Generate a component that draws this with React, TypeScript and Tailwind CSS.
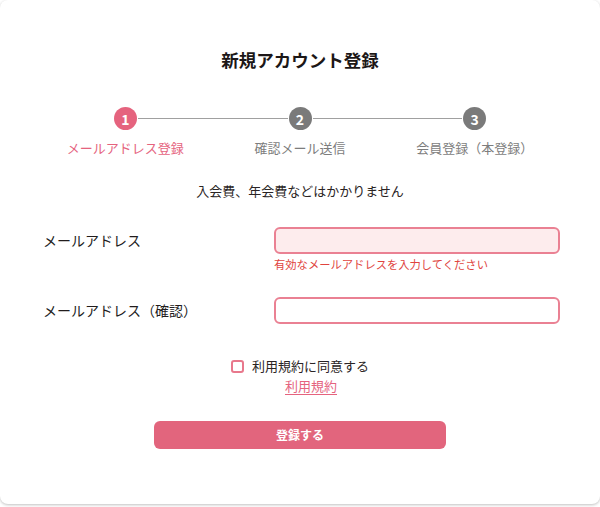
import React from "react";

const steps = [
  { n: 1, label: "メールアドレス登録", active: true },
  { n: 2, label: "確認メール送信", active: false },
  { n: 3, label: "会員登録（本登録）", active: false },
];

export default function App() {
  return (
    <div
      className="w-[600px] h-[507px] bg-white"
      style={{ fontFamily: '"Noto Sans CJK JP", "Noto Sans", sans-serif' }}
    >
      <div className="h-[504px] rounded-lg bg-white shadow-[0_1px_3px_rgba(0,0,0,0.25)] px-[38px] pt-[46px] flex flex-col items-stretch">
        <h1 className="text-center text-[17.5px] leading-[28px] font-bold text-[#1c1717]">
          新規アカウント登録
        </h1>

        <div className="grid grid-cols-3 mt-[33px]">
          {steps.map((s, i) => (
            <div key={s.n} className="flex flex-col items-center">
              <div className="flex items-center w-full">
                <div className={`flex-1 h-px ${i === 0 ? "bg-transparent" : "bg-[#a0a0a0]"}`} />
                <div
                  className={`w-[23px] h-[23px] mx-px rounded-full flex items-center justify-center text-white text-[14px] font-bold leading-none ${
                    s.active ? "bg-[#e5637e]" : "bg-[#7a7a7a]"
                  }`}
                >
                  {s.n}
                </div>
                <div className={`flex-1 h-px ${i === 2 ? "bg-transparent" : "bg-[#a0a0a0]"}`} />
              </div>
              <div
                className={`mt-[8px] text-[13px] leading-[20px] ${
                  s.active ? "text-[#e5637e]" : "text-[#7d7d7d]"
                }`}
              >
                {s.label}
              </div>
            </div>
          ))}
        </div>

        <p className="mt-[23px] text-center text-[13px] leading-[20px] text-[#2a2424]">
          入会費、年会費などはかかりません
        </p>

        <div className="mt-[26px] flex items-start">
          <label className="flex-1 pl-[5px] h-[27px] flex items-center text-[14px] text-[#221c1c]">
            メールアドレス
          </label>
          <div className="w-[286px] mr-[2px] flex flex-col">
            <input
              type="email"
              className="h-[27px] w-full rounded-md border-2 border-[#ea8193] bg-[#fdeced] outline-none px-2"
            />
            <span className="mt-[2px] text-[11.3px] leading-[16px] text-[#e0443e]">
              有効なメールアドレスを入力してください
            </span>
          </div>
        </div>

        <div className="mt-[25px] flex items-start">
          <label className="flex-1 pl-[5px] h-[27px] flex items-center text-[14px] text-[#221c1c]">
            メールアドレス（確認）
          </label>
          <div className="w-[286px] mr-[2px] flex flex-col">
            <input
              type="email"
              className="h-[27px] w-full rounded-md border-2 border-[#ea8193] bg-white outline-none px-2"
            />
          </div>
        </div>

        <div className="mt-[32px] flex flex-col items-center">
          <label className="flex items-center gap-[8px] text-[13px] leading-[20px] text-[#2a2424]">
            <span className="w-[13px] h-[13px] rounded-[3px] border-2 border-[#e8788c] bg-white" />
            利用規約に同意する
          </label>
          <a className="ml-[22px] mt-[1px] text-[13px] leading-[18px] text-[#e5637e] underline underline-offset-[3px] decoration-[#e5637e]">
            利用規約
          </a>
        </div>

        <div className="mt-[26px] flex justify-center">
          <button className="w-[292px] h-[28px] rounded-md bg-[#e2657d] text-white text-[12px] font-bold">
            登録する
          </button>
        </div>
      </div>
    </div>
  );
}
